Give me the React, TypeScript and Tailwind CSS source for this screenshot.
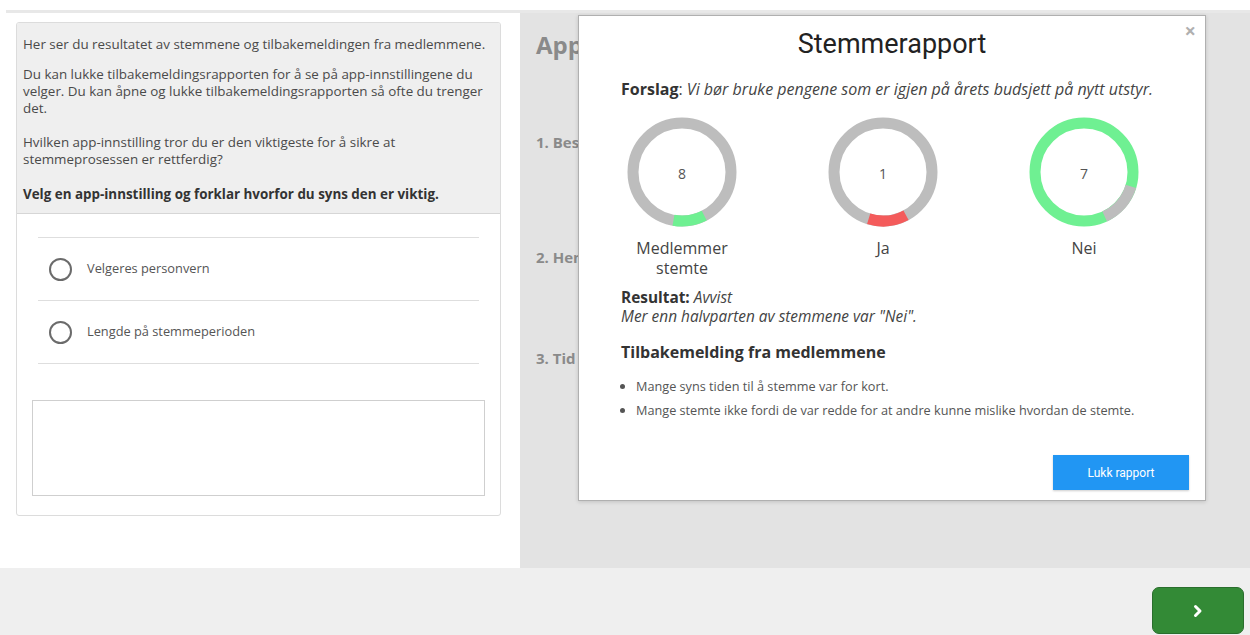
import React from "react";

type Arc = { from: number; to: number; color: string };

interface DonutProps {
  value: number;
  base: string;
  arc: Arc;
  label: React.ReactNode;
}

// point on the ring, angle in degrees clockwise from 12 o'clock
function pt(cx: number, cy: number, r: number, deg: number) {
  const a = (deg * Math.PI) / 180;
  return [cx + r * Math.sin(a), cy - r * Math.cos(a)];
}

function arcPath(cx: number, cy: number, r: number, from: number, to: number) {
  const [x1, y1] = pt(cx, cy, r, from);
  const [x2, y2] = pt(cx, cy, r, to);
  const large = to - from > 180 ? 1 : 0;
  return `M ${x1} ${y1} A ${r} ${r} 0 ${large} 1 ${x2} ${y2}`;
}

function Donut({ value, base, arc, label }: DonutProps) {
  return (
    <div className="flex w-[110px] flex-col items-center">
      <div className="relative h-[110px] w-[110px]">
        <svg width="110" height="110" viewBox="0 0 110 110">
          <circle cx="55" cy="55" r="49" fill="none" stroke={base} strokeWidth="11" />
          <path d={arcPath(55, 55, 49, arc.from, arc.to)} fill="none" stroke={arc.color} strokeWidth="11" />
        </svg>
        <div className="absolute inset-0 flex items-center justify-center pt-[3px] text-[14px] text-[#555]">{value}</div>
      </div>
      <div className="mt-[11px] text-center text-[16px] leading-[20px] text-[#444]">{label}</div>
    </div>
  );
}

export default function App() {
  return (
    <div className="relative h-[635px] w-[1250px] overflow-hidden bg-white font-['Open_Sans',sans-serif]">
      <div className="h-[10px]" />
      <div className="ml-[6px] h-[3px] bg-[#e8e8e8]" />

      <div className="flex h-[555px]">
        {/* task column */}
        <div className="w-[520px] bg-white pl-[16px] pt-[9px]">
          <div className="w-[485px] overflow-hidden rounded-[3px] border border-[#dcdcdc]">
            <div className="h-[191px] border-b border-[#d6d6d6] bg-[#efefef] pl-[6px] pr-[8px] pt-[13px] text-[13.4px] leading-[17px] text-[#4a4a4a]">
              <p className="mb-[13px]">Her ser du resultatet av stemmene og tilbakemeldingen fra medlemmene.</p>
              <p className="mb-[17px]">
                Du kan lukke tilbakemeldingsrapporten for å se på app-innstillingene du velger. Du kan åpne og lukke
                tilbakemeldingsrapporten så ofte du trenger det.
              </p>
              <p className="mb-[18px]">Hvilken app-innstilling tror du er den viktigeste for å sikre at stemmeprosessen er rettferdig?</p>
              <p className="font-bold text-[#333]">Velg en app-innstilling og forklar hvorfor du syns den er viktig.</p>
            </div>
            <div className="px-[21px] pt-[23px]">
              <div className="border-t border-[#dedede]">
                {["Velgeres personvern", "Lengde på stemmeperioden"].map((o) => (
                  <div key={o} className="flex h-[63px] items-center border-b border-[#dedede] pl-[11px]">
                    <span className="h-[23px] w-[23px] rounded-full border-2 border-[#6b6b6b]" />
                    <span className="ml-[15px] text-[12.8px] text-[#555]">{o}</span>
                  </div>
                ))}
              </div>
            </div>
            <div className="px-[15px] pb-[19px] pt-[36px]">
              <div className="h-[96px] border border-[#cfcfcf] bg-white" />
            </div>
          </div>
        </div>

        {/* settings column, sits behind the report */}
        <div className="flex-1 overflow-hidden bg-[#e3e3e3] pl-[16px] pt-[18px] font-bold text-[#8a8a8a]">
          <h1 className="text-[24px] leading-[28px]">Appinnstillinger</h1>
          <p className="mt-[72px] text-[15px]">1. Bestem hvem som kan stemme</p>
          <p className="mt-[92px] text-[15px]">2. Hemmelig eller åpen stemmegivning</p>
          <p className="mt-[79px] text-[15px]">3. Tid til å stemme</p>
        </div>
      </div>

      <div className="flex h-[67px] items-end justify-end bg-[#efefef] pb-[1px] pr-[6px]">
        <button className="flex h-[47px] w-[92px] items-center justify-center rounded-[7px] border border-[#2a6e2d] bg-[#338a36]">
          <svg width="14" height="14" viewBox="0 0 14 14">
            <path d="M4.5 2.5 L9 7 L4.5 11.5" fill="none" stroke="white" strokeWidth="3" strokeLinecap="round" strokeLinejoin="round" />
          </svg>
        </button>
      </div>

      {/* report dialog */}
      <div className="absolute left-[578px] top-[15px] h-[486px] w-[628px] border border-[#b0b0b0] bg-white shadow-[0_1px_4px_rgba(0,0,0,0.15)]">
        <button className="absolute right-[9px] top-[5px] text-[20px] font-bold leading-none text-[#b0b0b0]">×</button>
        <h2 className="pt-[11px] text-center font-['Roboto',sans-serif] text-[27px] leading-[34px] text-[#222]">Stemmerapport</h2>

        <div className="pl-[42px] pr-[10px]">
          <p className="mt-[18px] text-[16px] leading-[20px] text-[#444]">
            <span className="font-bold text-[#333]">Forslag</span>: <em>Vi bør bruke pengene som er igjen på årets budsjett på nytt utstyr.</em>
          </p>
        </div>

        <div className="mt-[18px] flex gap-[91px] pl-[48px]">
          <Donut value={8} base="#bdbdbd" arc={{ from: 153, to: 190, color: "#6ff092" }} label={<>Medlemmer<br />stemte</>} />
          <Donut value={1} base="#bdbdbd" arc={{ from: 152, to: 197, color: "#f45b5b" }} label="Ja" />
          <Donut value={7} base="#6ff092" arc={{ from: 107, to: 155, color: "#bdbdbd" }} label="Nei" />
        </div>

        <div className="pl-[42px] pr-[20px] text-[#444]">
          <p className="mt-[10px] text-[15.4px] leading-[19px]">
            <span className="font-bold text-[#333]">Resultat:</span> <em>Avvist</em>
          </p>
          <p className="text-[15.4px] italic leading-[19px]">Mer enn halvparten av stemmene var "Nei".</p>
          <h3 className="mt-[15px] text-[16px] font-bold leading-[22px] text-[#333]">Tilbakemelding fra medlemmene</h3>
          <ul className="mt-[11px] list-disc pl-[15px] text-[12.7px] leading-[24px] text-[#555]">
            <li>Mange syns tiden til å stemme var for kort.</li>
            <li>Mange stemte ikke fordi de var redde for at andre kunne mislike hvordan de stemte.</li>
          </ul>
        </div>

        <div className="absolute bottom-[10px] right-[16px]">
          <button className="h-[35px] w-[136px] bg-[#2196f3] font-['Roboto',sans-serif] text-[12px] text-white shadow-[0_1px_2px_rgba(0,0,0,0.2)]">
            Lukk rapport
          </button>
        </div>
      </div>
    </div>
  );
}
